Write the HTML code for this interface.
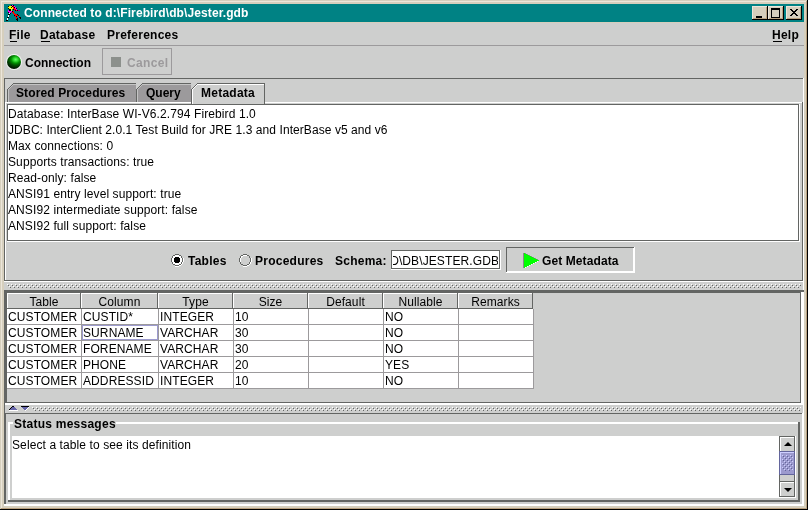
<!DOCTYPE html>
<html><head><meta charset="utf-8"><style>
html,body{margin:0;padding:0}
body{width:808px;height:510px;position:relative;overflow:hidden;background:#d6cfbd;font-family:"Liberation Sans",sans-serif;font-size:12px}
body div, body svg, body span{position:absolute;box-sizing:content-box}
.t{position:absolute;white-space:pre;line-height:16px;font-size:12px;font-family:"Liberation Sans",sans-serif;letter-spacing:0.1px}
.b{font-weight:bold;letter-spacing:0.25px}
body{will-change:transform}
</style></head><body>
<div style="left:1px;top:1px;width:806px;height:1px;background:#ece6da;"></div>
<div style="left:1px;top:1px;width:1px;height:507px;background:#ece6da;"></div>
<div style="left:1px;top:508px;width:806px;height:1px;background:#b9a17f;"></div>
<div style="left:806px;top:1px;width:1px;height:508px;background:#b9a17f;"></div>
<div style="left:0px;top:509px;width:808px;height:1px;background:#000000;"></div>
<div style="left:807px;top:0px;width:1px;height:510px;background:#000000;"></div>
<div style="left:4px;top:4px;width:800px;height:18px;background:#008284;"></div>
<span class="t b" style="left:24px;top:5px;color:#fff;letter-spacing:0.1px">Connected to d:\Firebird\db\Jester.gdb</span>
<div style="left:752px;top:6px;width:16px;height:14px;background:#000000;"></div>
<div style="left:752px;top:6px;width:15px;height:13px;background:#ece6da;"></div>
<div style="left:753px;top:7px;width:14px;height:12px;background:#b9a17f;"></div>
<div style="left:753px;top:7px;width:13px;height:11px;background:#d6cfbd;"></div>
<div style="left:756px;top:16px;width:6px;height:2px;background:#000"></div>
<div style="left:768px;top:6px;width:16px;height:14px;background:#000000;"></div>
<div style="left:768px;top:6px;width:15px;height:13px;background:#ece6da;"></div>
<div style="left:769px;top:7px;width:14px;height:12px;background:#b9a17f;"></div>
<div style="left:769px;top:7px;width:13px;height:11px;background:#d6cfbd;"></div>
<div style="left:771px;top:8px;width:7px;height:7px;border:1px solid #000;border-top-width:2px"></div>
<div style="left:786px;top:6px;width:16px;height:14px;background:#000000;"></div>
<div style="left:786px;top:6px;width:15px;height:13px;background:#ece6da;"></div>
<div style="left:787px;top:7px;width:14px;height:12px;background:#b9a17f;"></div>
<div style="left:787px;top:7px;width:13px;height:11px;background:#d6cfbd;"></div>
<svg style="left:789px;top:8px" width="10" height="9" viewBox="0 0 10 9"><path d="M1 1h2v1h1v1h2v-1h1v-1h2v1h-1v1h-1v1h-1v1h1v1h1v1h1v1h-2v-1h-1v-1h-2v1h-1v1h-2v-1h1v-1h1v-1h1v-1h-1v-1h-1v-1h-1z" fill="#000"/></svg>
<div style="left:4px;top:23px;width:800px;height:483px;background:#cecfce;"></div>
<span class="t b" style="left:9px;top:27px;color:#000;">File</span>
<span class="t b" style="left:40px;top:27px;color:#000;">Database</span>
<span class="t b" style="left:107px;top:27px;color:#000;">Preferences</span>
<span class="t b" style="left:772px;top:27px;color:#000;">Help</span>
<div style="left:10px;top:41px;width:7px;height:1px;background:#000;"></div>
<div style="left:41px;top:41px;width:9px;height:1px;background:#000;"></div>
<div style="left:773px;top:41px;width:9px;height:1px;background:#000;"></div>
<div style="left:4px;top:45px;width:800px;height:1px;background:#9c9a9c;"></div>
<div style="left:6px;top:54px;width:16px;height:16px;border-radius:50%;background:rgba(255,255,255,0.75)"></div><div style="left:7px;top:55px;width:14px;height:14px;border-radius:50%;background:radial-gradient(ellipse 120% 100% at 62% 32%, #66ff66 0px, #33dd33 2px, #009000 4.5px, #005000 7px, #002000 10px, #001000 12px)"></div>
<span class="t b" style="left:25px;top:55px;color:#000;letter-spacing:0px">Connection</span>
<div style="left:102px;top:48px;width:70px;height:27px;background:#9c9a9c;"></div>
<div style="left:103px;top:49px;width:68px;height:25px;background:#cecfce;"></div>
<div style="left:111px;top:57px;width:10px;height:10px;background:#8c908c;"></div>
<span class="t b" style="left:127px;top:55px;color:#9c9a9c;letter-spacing:0.35px">Cancel</span>
<div style="left:4px;top:78px;width:800px;height:204px;background:#ffffff;"></div>
<div style="left:4px;top:78px;width:799px;height:203px;background:#636563;"></div>
<div style="left:5px;top:79px;width:798px;height:202px;background:#cecfce;"></div>
<div style="left:5px;top:102px;width:798px;height:179px;background:#636563;"></div>
<div style="left:5px;top:102px;width:797px;height:178px;background:#ffffff;"></div>
<div style="left:6px;top:103px;width:796px;height:177px;background:#cecfce;"></div>
<svg style="left:7px;top:83px" width="129" height="19" shape-rendering="crispEdges"><polygon points="0,19 0,6 6,0 129,0 129,19" fill="#9c9a9c"/><rect x="0" y="6" width="1" height="13" fill="#636563"/><rect x="0" y="6" width="1" height="1" fill="#636563"/><rect x="1" y="5" width="1" height="1" fill="#636563"/><rect x="2" y="4" width="1" height="1" fill="#636563"/><rect x="3" y="3" width="1" height="1" fill="#636563"/><rect x="4" y="2" width="1" height="1" fill="#636563"/><rect x="5" y="1" width="1" height="1" fill="#636563"/><rect x="6" y="0" width="123" height="1" fill="#636563"/><rect x="1" y="6" width="1" height="13" fill="#c4c4c4"/><rect x="1" y="6" width="1" height="1" fill="#c4c4c4"/><rect x="2" y="5" width="1" height="1" fill="#c4c4c4"/><rect x="3" y="4" width="1" height="1" fill="#c4c4c4"/><rect x="4" y="3" width="1" height="1" fill="#c4c4c4"/><rect x="5" y="2" width="1" height="1" fill="#c4c4c4"/><rect x="6" y="1" width="123" height="1" fill="#c4c4c4"/></svg>
<span class="t b" style="left:16px;top:85px;color:#000;letter-spacing:0.12px">Stored Procedures</span>
<svg style="left:136px;top:83px" width="55" height="19" shape-rendering="crispEdges"><polygon points="0,19 0,6 6,0 55,0 55,19" fill="#9c9a9c"/><rect x="0" y="6" width="1" height="13" fill="#636563"/><rect x="0" y="6" width="1" height="1" fill="#636563"/><rect x="1" y="5" width="1" height="1" fill="#636563"/><rect x="2" y="4" width="1" height="1" fill="#636563"/><rect x="3" y="3" width="1" height="1" fill="#636563"/><rect x="4" y="2" width="1" height="1" fill="#636563"/><rect x="5" y="1" width="1" height="1" fill="#636563"/><rect x="6" y="0" width="49" height="1" fill="#636563"/><rect x="1" y="6" width="1" height="13" fill="#c4c4c4"/><rect x="1" y="6" width="1" height="1" fill="#c4c4c4"/><rect x="2" y="5" width="1" height="1" fill="#c4c4c4"/><rect x="3" y="4" width="1" height="1" fill="#c4c4c4"/><rect x="4" y="3" width="1" height="1" fill="#c4c4c4"/><rect x="5" y="2" width="1" height="1" fill="#c4c4c4"/><rect x="6" y="1" width="49" height="1" fill="#c4c4c4"/></svg>
<span class="t b" style="left:146px;top:85px;color:#000;letter-spacing:0px">Query</span>
<svg style="left:191px;top:83px" width="74" height="21" shape-rendering="crispEdges"><polygon points="0,21 0,6 6,0 74,0 74,21" fill="#cecfce"/><rect x="0" y="6" width="1" height="15" fill="#636563"/><rect x="0" y="6" width="1" height="1" fill="#636563"/><rect x="1" y="5" width="1" height="1" fill="#636563"/><rect x="2" y="4" width="1" height="1" fill="#636563"/><rect x="3" y="3" width="1" height="1" fill="#636563"/><rect x="4" y="2" width="1" height="1" fill="#636563"/><rect x="5" y="1" width="1" height="1" fill="#636563"/><rect x="6" y="0" width="68" height="1" fill="#636563"/><rect x="73" y="0" width="1" height="21" fill="#636563"/><rect x="1" y="6" width="1" height="15" fill="#ffffff"/><rect x="1" y="6" width="1" height="1" fill="#ffffff"/><rect x="2" y="5" width="1" height="1" fill="#ffffff"/><rect x="3" y="4" width="1" height="1" fill="#ffffff"/><rect x="4" y="3" width="1" height="1" fill="#ffffff"/><rect x="5" y="2" width="1" height="1" fill="#ffffff"/><rect x="6" y="1" width="67" height="1" fill="#ffffff"/></svg>
<span class="t b" style="left:201px;top:85px;color:#000;">Metadata</span>
<div style="left:7px;top:104px;width:793px;height:138px;background:#ffffff;"></div>
<div style="left:7px;top:104px;width:792px;height:137px;background:#636563;"></div>
<div style="left:8px;top:105px;width:790px;height:135px;background:#ffffff;"></div>
<span class="t" style="left:8px;top:106px;color:#000;">Database: InterBase WI-V6.2.794 Firebird 1.0</span>
<span class="t" style="left:8px;top:122px;color:#000;letter-spacing:0.07px">JDBC: InterClient 2.0.1 Test Build for JRE 1.3 and InterBase v5 and v6</span>
<span class="t" style="left:8px;top:138px;color:#000;">Max connections: 0</span>
<span class="t" style="left:8px;top:154px;color:#000;">Supports transactions: true</span>
<span class="t" style="left:8px;top:170px;color:#000;">Read-only: false</span>
<span class="t" style="left:8px;top:186px;color:#000;">ANSI91 entry level support: true</span>
<span class="t" style="left:8px;top:202px;color:#000;">ANSI92 intermediate support: false</span>
<span class="t" style="left:8px;top:218px;color:#000;">ANSI92 full support: false</span>
<svg style="left:171px;top:254px" width="13" height="13" shape-rendering="crispEdges"><rect x="4" y="1" width="4" height="1" fill="#fff"/><rect x="2" y="2" width="8" height="1" fill="#fff"/><rect x="2" y="3" width="8" height="1" fill="#fff"/><rect x="1" y="4" width="10" height="1" fill="#fff"/><rect x="1" y="5" width="10" height="1" fill="#fff"/><rect x="1" y="6" width="10" height="1" fill="#fff"/><rect x="1" y="7" width="10" height="1" fill="#fff"/><rect x="2" y="8" width="8" height="1" fill="#fff"/><rect x="2" y="9" width="8" height="1" fill="#fff"/><rect x="4" y="10" width="4" height="1" fill="#fff"/><rect x="4" y="3" width="4" height="6" fill="#000"/><rect x="3" y="4" width="6" height="4" fill="#000"/><rect x="4" y="12" width="4" height="1" fill="#fff"/><rect x="8" y="11" width="2" height="1" fill="#fff"/><rect x="10" y="10" width="1" height="1" fill="#fff"/><rect x="12" y="4" width="1" height="4" fill="#fff"/><rect x="11" y="8" width="1" height="2" fill="#fff"/><rect x="4" y="0" width="4" height="1" fill="#636563"/><rect x="2" y="1" width="2" height="1" fill="#636563"/><rect x="8" y="1" width="2" height="1" fill="#636563"/><rect x="4" y="11" width="4" height="1" fill="#636563"/><rect x="2" y="10" width="2" height="1" fill="#636563"/><rect x="8" y="10" width="2" height="1" fill="#636563"/><rect x="1" y="2" width="1" height="2" fill="#636563"/><rect x="10" y="2" width="1" height="2" fill="#636563"/><rect x="0" y="4" width="1" height="4" fill="#636563"/><rect x="11" y="4" width="1" height="4" fill="#636563"/><rect x="1" y="8" width="1" height="2" fill="#636563"/><rect x="10" y="8" width="1" height="2" fill="#636563"/></svg>
<span class="t b" style="left:188px;top:253px;color:#000;">Tables</span>
<svg style="left:239px;top:254px" width="13" height="13" shape-rendering="crispEdges"><rect x="4" y="1" width="4" height="1" fill="#fff"/><rect x="2" y="2" width="2" height="1" fill="#fff"/><rect x="2" y="3" width="1" height="1" fill="#fff"/><rect x="1" y="4" width="1" height="4" fill="#fff"/><rect x="4" y="12" width="4" height="1" fill="#fff"/><rect x="8" y="11" width="2" height="1" fill="#fff"/><rect x="10" y="10" width="1" height="1" fill="#fff"/><rect x="12" y="4" width="1" height="4" fill="#fff"/><rect x="11" y="8" width="1" height="2" fill="#fff"/><rect x="4" y="0" width="4" height="1" fill="#636563"/><rect x="2" y="1" width="2" height="1" fill="#636563"/><rect x="8" y="1" width="2" height="1" fill="#636563"/><rect x="4" y="11" width="4" height="1" fill="#636563"/><rect x="2" y="10" width="2" height="1" fill="#636563"/><rect x="8" y="10" width="2" height="1" fill="#636563"/><rect x="1" y="2" width="1" height="2" fill="#636563"/><rect x="10" y="2" width="1" height="2" fill="#636563"/><rect x="0" y="4" width="1" height="4" fill="#636563"/><rect x="11" y="4" width="1" height="4" fill="#636563"/><rect x="1" y="8" width="1" height="2" fill="#636563"/><rect x="10" y="8" width="1" height="2" fill="#636563"/></svg>
<span class="t b" style="left:255px;top:253px;color:#000;">Procedures</span>
<span class="t b" style="left:335px;top:253px;color:#000;">Schema:</span>
<div style="left:391px;top:250px;width:110px;height:20px;background:#ffffff;"></div>
<div style="left:391px;top:250px;width:109px;height:19px;background:#636563;"></div>
<div style="left:392px;top:251px;width:107px;height:17px;background:#ffffff;"></div>
<div style="left:393px;top:251px;width:105px;height:17px;overflow:hidden"><span class="t" style="right:-1px;top:2px">FIREBIRD\DB\JESTER.GDB</span></div>
<div style="left:506px;top:247px;width:129px;height:26px;background:#ffffff;"></div>
<div style="left:506px;top:247px;width:128px;height:25px;background:#636563;"></div>
<div style="left:507px;top:248px;width:127px;height:24px;background:#ffffff;"></div>
<div style="left:507px;top:248px;width:126px;height:23px;background:#cecfce;"></div>
<svg style="left:523px;top:253px" width="18" height="15" shape-rendering="crispEdges"><rect x="0" y="0" width="1" height="15" fill="#888888"/><rect x="1" y="0" width="1" height="1" fill="#00ff00"/><rect x="2" y="0" width="1" height="1" fill="#8a8a8a"/><rect x="1" y="1" width="3" height="1" fill="#00ff00"/><rect x="4" y="1" width="1" height="1" fill="#8a8a8a"/><rect x="1" y="2" width="5" height="1" fill="#00ff00"/><rect x="6" y="2" width="1" height="1" fill="#8a8a8a"/><rect x="1" y="3" width="7" height="1" fill="#00ff00"/><rect x="8" y="3" width="1" height="1" fill="#8a8a8a"/><rect x="1" y="4" width="9" height="1" fill="#00ff00"/><rect x="10" y="4" width="1" height="1" fill="#8a8a8a"/><rect x="1" y="5" width="11" height="1" fill="#00ff00"/><rect x="12" y="5" width="1" height="1" fill="#8a8a8a"/><rect x="1" y="6" width="13" height="1" fill="#00ff00"/><rect x="14" y="6" width="1" height="1" fill="#8a8a8a"/><rect x="1" y="7" width="15" height="1" fill="#00ff00"/><rect x="1" y="8" width="13" height="1" fill="#00ff00"/><rect x="14" y="8" width="1" height="1" fill="#ffffff"/><rect x="1" y="9" width="11" height="1" fill="#00ff00"/><rect x="12" y="9" width="1" height="1" fill="#ffffff"/><rect x="1" y="10" width="9" height="1" fill="#00ff00"/><rect x="10" y="10" width="1" height="1" fill="#ffffff"/><rect x="1" y="11" width="7" height="1" fill="#00ff00"/><rect x="8" y="11" width="1" height="1" fill="#ffffff"/><rect x="1" y="12" width="5" height="1" fill="#00ff00"/><rect x="6" y="12" width="1" height="1" fill="#ffffff"/><rect x="1" y="13" width="3" height="1" fill="#00ff00"/><rect x="4" y="13" width="1" height="1" fill="#ffffff"/><rect x="1" y="14" width="1" height="1" fill="#00ff00"/><rect x="2" y="14" width="1" height="1" fill="#ffffff"/></svg>
<span class="t b" style="left:542px;top:253px;color:#000;letter-spacing:0.1px">Get Metadata</span>
<svg style="left:7px;top:284px" width="794" height="4"><defs><pattern id="b7_284" width="4" height="4" patternUnits="userSpaceOnUse"><rect x="0" y="0" width="1" height="1" fill="#ffffff"/><rect x="1" y="1" width="1" height="1" fill="#636563"/><rect x="2" y="2" width="1" height="1" fill="#ffffff"/><rect x="3" y="3" width="1" height="1" fill="#636563"/></pattern></defs><rect width="794" height="4" fill="url(#b7_284)" shape-rendering="crispEdges"/></svg>
<div style="left:4px;top:290px;width:800px;height:115px;background:#ffffff;"></div>
<div style="left:4px;top:290px;width:800px;height:2px;background:#636563;"></div>
<div style="left:4px;top:290px;width:1px;height:115px;background:#636563;"></div>
<div style="left:5px;top:290px;width:1px;height:113px;background:#636563;"></div>
<div style="left:6px;top:292px;width:795px;height:111px;background:#636563;"></div>
<div style="left:7px;top:293px;width:793px;height:109px;background:#cecfce;"></div>
<div style="left:7px;top:293px;width:74px;height:16px;background:#636563;"></div>
<div style="left:7px;top:293px;width:73px;height:15px;background:#ffffff;"></div>
<div style="left:8px;top:294px;width:72px;height:14px;background:#cecfce;"></div>
<span class="t" style="left:7px;width:74px;text-align:center;top:294px">Table</span>
<div style="left:81px;top:293px;width:77px;height:16px;background:#636563;"></div>
<div style="left:81px;top:293px;width:76px;height:15px;background:#ffffff;"></div>
<div style="left:82px;top:294px;width:75px;height:14px;background:#cecfce;"></div>
<span class="t" style="left:81px;width:77px;text-align:center;top:294px">Column</span>
<div style="left:158px;top:293px;width:75px;height:16px;background:#636563;"></div>
<div style="left:158px;top:293px;width:74px;height:15px;background:#ffffff;"></div>
<div style="left:159px;top:294px;width:73px;height:14px;background:#cecfce;"></div>
<span class="t" style="left:158px;width:75px;text-align:center;top:294px">Type</span>
<div style="left:233px;top:293px;width:75px;height:16px;background:#636563;"></div>
<div style="left:233px;top:293px;width:74px;height:15px;background:#ffffff;"></div>
<div style="left:234px;top:294px;width:73px;height:14px;background:#cecfce;"></div>
<span class="t" style="left:233px;width:75px;text-align:center;top:294px">Size</span>
<div style="left:308px;top:293px;width:75px;height:16px;background:#636563;"></div>
<div style="left:308px;top:293px;width:74px;height:15px;background:#ffffff;"></div>
<div style="left:309px;top:294px;width:73px;height:14px;background:#cecfce;"></div>
<span class="t" style="left:308px;width:75px;text-align:center;top:294px">Default</span>
<div style="left:383px;top:293px;width:75px;height:16px;background:#636563;"></div>
<div style="left:383px;top:293px;width:74px;height:15px;background:#ffffff;"></div>
<div style="left:384px;top:294px;width:73px;height:14px;background:#cecfce;"></div>
<span class="t" style="left:383px;width:75px;text-align:center;top:294px">Nullable</span>
<div style="left:458px;top:293px;width:75px;height:16px;background:#636563;"></div>
<div style="left:458px;top:293px;width:74px;height:15px;background:#ffffff;"></div>
<div style="left:459px;top:294px;width:73px;height:14px;background:#cecfce;"></div>
<span class="t" style="left:458px;width:75px;text-align:center;top:294px">Remarks</span>
<div style="left:7px;top:309px;width:527px;height:80px;background:#9c9a9c;"></div>
<div style="left:7px;top:309px;width:74px;height:15px;background:#ffffff;"></div>
<span class="t" style="left:8px;top:309px;color:#000;">CUSTOMER</span>
<div style="left:82px;top:309px;width:76px;height:15px;background:#ffffff;"></div>
<span class="t" style="left:83px;top:309px;color:#000;">CUSTID*</span>
<div style="left:159px;top:309px;width:74px;height:15px;background:#ffffff;"></div>
<span class="t" style="left:160px;top:309px;color:#000;">INTEGER</span>
<div style="left:234px;top:309px;width:74px;height:15px;background:#ffffff;"></div>
<span class="t" style="left:235px;top:309px;color:#000;">10</span>
<div style="left:309px;top:309px;width:74px;height:15px;background:#ffffff;"></div>
<div style="left:384px;top:309px;width:74px;height:15px;background:#ffffff;"></div>
<span class="t" style="left:385px;top:309px;color:#000;">NO</span>
<div style="left:459px;top:309px;width:74px;height:15px;background:#ffffff;"></div>
<div style="left:7px;top:325px;width:74px;height:15px;background:#ffffff;"></div>
<span class="t" style="left:8px;top:325px;color:#000;">CUSTOMER</span>
<div style="left:82px;top:325px;width:76px;height:15px;background:#ffffff;"></div>
<span class="t" style="left:83px;top:325px;color:#000;">SURNAME</span>
<div style="left:159px;top:325px;width:74px;height:15px;background:#ffffff;"></div>
<span class="t" style="left:160px;top:325px;color:#000;">VARCHAR</span>
<div style="left:234px;top:325px;width:74px;height:15px;background:#ffffff;"></div>
<span class="t" style="left:235px;top:325px;color:#000;">30</span>
<div style="left:309px;top:325px;width:74px;height:15px;background:#ffffff;"></div>
<div style="left:384px;top:325px;width:74px;height:15px;background:#ffffff;"></div>
<span class="t" style="left:385px;top:325px;color:#000;">NO</span>
<div style="left:459px;top:325px;width:74px;height:15px;background:#ffffff;"></div>
<div style="left:7px;top:341px;width:74px;height:15px;background:#ffffff;"></div>
<span class="t" style="left:8px;top:341px;color:#000;">CUSTOMER</span>
<div style="left:82px;top:341px;width:76px;height:15px;background:#ffffff;"></div>
<span class="t" style="left:83px;top:341px;color:#000;">FORENAME</span>
<div style="left:159px;top:341px;width:74px;height:15px;background:#ffffff;"></div>
<span class="t" style="left:160px;top:341px;color:#000;">VARCHAR</span>
<div style="left:234px;top:341px;width:74px;height:15px;background:#ffffff;"></div>
<span class="t" style="left:235px;top:341px;color:#000;">30</span>
<div style="left:309px;top:341px;width:74px;height:15px;background:#ffffff;"></div>
<div style="left:384px;top:341px;width:74px;height:15px;background:#ffffff;"></div>
<span class="t" style="left:385px;top:341px;color:#000;">NO</span>
<div style="left:459px;top:341px;width:74px;height:15px;background:#ffffff;"></div>
<div style="left:7px;top:357px;width:74px;height:15px;background:#ffffff;"></div>
<span class="t" style="left:8px;top:357px;color:#000;">CUSTOMER</span>
<div style="left:82px;top:357px;width:76px;height:15px;background:#ffffff;"></div>
<span class="t" style="left:83px;top:357px;color:#000;">PHONE</span>
<div style="left:159px;top:357px;width:74px;height:15px;background:#ffffff;"></div>
<span class="t" style="left:160px;top:357px;color:#000;">VARCHAR</span>
<div style="left:234px;top:357px;width:74px;height:15px;background:#ffffff;"></div>
<span class="t" style="left:235px;top:357px;color:#000;">20</span>
<div style="left:309px;top:357px;width:74px;height:15px;background:#ffffff;"></div>
<div style="left:384px;top:357px;width:74px;height:15px;background:#ffffff;"></div>
<span class="t" style="left:385px;top:357px;color:#000;">YES</span>
<div style="left:459px;top:357px;width:74px;height:15px;background:#ffffff;"></div>
<div style="left:7px;top:373px;width:74px;height:15px;background:#ffffff;"></div>
<span class="t" style="left:8px;top:373px;color:#000;">CUSTOMER</span>
<div style="left:82px;top:373px;width:76px;height:15px;background:#ffffff;"></div>
<span class="t" style="left:83px;top:373px;color:#000;">ADDRESSID</span>
<div style="left:159px;top:373px;width:74px;height:15px;background:#ffffff;"></div>
<span class="t" style="left:160px;top:373px;color:#000;">INTEGER</span>
<div style="left:234px;top:373px;width:74px;height:15px;background:#ffffff;"></div>
<span class="t" style="left:235px;top:373px;color:#000;">10</span>
<div style="left:309px;top:373px;width:74px;height:15px;background:#ffffff;"></div>
<div style="left:384px;top:373px;width:74px;height:15px;background:#ffffff;"></div>
<span class="t" style="left:385px;top:373px;color:#000;">NO</span>
<div style="left:459px;top:373px;width:74px;height:15px;background:#ffffff;"></div>
<div style="left:82px;top:325px;width:74px;height:13px;border:1px solid #9c9ace"></div>
<svg style="left:8px;top:406px" width="24" height="5" shape-rendering="crispEdges"><rect x="4" y="0" width="1" height="1" fill="#000000"/><rect x="5" y="0" width="1" height="1" fill="#000000"/><rect x="13" y="0" width="1" height="1" fill="#000000"/><rect x="14" y="0" width="1" height="1" fill="#000000"/><rect x="15" y="0" width="1" height="1" fill="#000000"/><rect x="16" y="0" width="1" height="1" fill="#000000"/><rect x="17" y="0" width="1" height="1" fill="#000000"/><rect x="18" y="0" width="1" height="1" fill="#000000"/><rect x="19" y="0" width="1" height="1" fill="#000000"/><rect x="20" y="0" width="1" height="1" fill="#000000"/><rect x="3" y="1" width="1" height="1" fill="#000000"/><rect x="4" y="1" width="1" height="1" fill="#6666aa"/><rect x="5" y="1" width="1" height="1" fill="#6666aa"/><rect x="6" y="1" width="1" height="1" fill="#6666aa"/><rect x="14" y="1" width="1" height="1" fill="#6666aa"/><rect x="15" y="1" width="1" height="1" fill="#6666aa"/><rect x="16" y="1" width="1" height="1" fill="#6666aa"/><rect x="17" y="1" width="1" height="1" fill="#6666aa"/><rect x="18" y="1" width="1" height="1" fill="#6666aa"/><rect x="19" y="1" width="1" height="1" fill="#6666aa"/><rect x="20" y="1" width="1" height="1" fill="#ffffff"/><rect x="2" y="2" width="1" height="1" fill="#000000"/><rect x="3" y="2" width="1" height="1" fill="#6666aa"/><rect x="4" y="2" width="1" height="1" fill="#6666aa"/><rect x="5" y="2" width="1" height="1" fill="#6666aa"/><rect x="6" y="2" width="1" height="1" fill="#6666aa"/><rect x="7" y="2" width="1" height="1" fill="#6666aa"/><rect x="15" y="2" width="1" height="1" fill="#6666aa"/><rect x="16" y="2" width="1" height="1" fill="#6666aa"/><rect x="17" y="2" width="1" height="1" fill="#6666aa"/><rect x="18" y="2" width="1" height="1" fill="#6666aa"/><rect x="19" y="2" width="1" height="1" fill="#ffffff"/><rect x="1" y="3" width="1" height="1" fill="#000000"/><rect x="2" y="3" width="1" height="1" fill="#6666aa"/><rect x="3" y="3" width="1" height="1" fill="#6666aa"/><rect x="4" y="3" width="1" height="1" fill="#6666aa"/><rect x="5" y="3" width="1" height="1" fill="#6666aa"/><rect x="6" y="3" width="1" height="1" fill="#6666aa"/><rect x="7" y="3" width="1" height="1" fill="#6666aa"/><rect x="8" y="3" width="1" height="1" fill="#6666aa"/><rect x="16" y="3" width="1" height="1" fill="#6666aa"/><rect x="17" y="3" width="1" height="1" fill="#6666aa"/><rect x="18" y="3" width="1" height="1" fill="#ffffff"/><rect x="1" y="4" width="1" height="1" fill="#ffffff"/><rect x="2" y="4" width="1" height="1" fill="#ffffff"/><rect x="3" y="4" width="1" height="1" fill="#ffffff"/><rect x="4" y="4" width="1" height="1" fill="#ffffff"/><rect x="5" y="4" width="1" height="1" fill="#ffffff"/><rect x="6" y="4" width="1" height="1" fill="#ffffff"/><rect x="7" y="4" width="1" height="1" fill="#ffffff"/><rect x="8" y="4" width="1" height="1" fill="#ffffff"/><rect x="9" y="4" width="1" height="1" fill="#ffffff"/><rect x="17" y="4" width="1" height="1" fill="#ffffff"/></svg>
<svg style="left:32px;top:407px" width="769" height="4"><defs><pattern id="b32_407" width="4" height="4" patternUnits="userSpaceOnUse"><rect x="0" y="0" width="1" height="1" fill="#ffffff"/><rect x="1" y="1" width="1" height="1" fill="#636563"/><rect x="2" y="2" width="1" height="1" fill="#ffffff"/><rect x="3" y="3" width="1" height="1" fill="#636563"/></pattern></defs><rect width="769" height="4" fill="url(#b32_407)" shape-rendering="crispEdges"/></svg>
<div style="left:4px;top:405px;width:1px;height:8px;background:#636563;"></div>
<div style="left:803px;top:282px;width:1px;height:8px;background:#ffffff;"></div>
<div style="left:803px;top:405px;width:1px;height:8px;background:#ffffff;"></div>
<div style="left:4px;top:413px;width:800px;height:93px;background:#ffffff;"></div>
<div style="left:4px;top:413px;width:798px;height:91px;background:#636563;"></div>
<div style="left:6px;top:414px;width:796px;height:90px;background:#cecfce;"></div>
<div style="left:8px;top:422px;width:792px;height:80px;background:#636563;"></div>
<div style="left:8px;top:422px;width:790px;height:78px;background:#ffffff;"></div>
<div style="left:10px;top:424px;width:788px;height:76px;background:#cecfce;"></div>
<div style="left:13px;top:416px;width:103px;height:13px;background:#cecfce;"></div>
<span class="t b" style="left:14px;top:416px;color:#000;">Status messages</span>
<div style="left:12px;top:436px;width:767px;height:62px;background:#ffffff;"></div>
<span class="t" style="left:12px;top:437px;color:#000;">Select a table to see its definition</span>
<div style="left:779px;top:436px;width:17px;height:62px;background:#ffffff;"></div>
<div style="left:779px;top:436px;width:16px;height:61px;background:#636563;"></div>
<div style="left:780px;top:437px;width:14px;height:60px;background:#cecfce;"></div>
<div style="left:779px;top:436px;width:16px;height:16px;background:#636563;"></div>
<div style="left:780px;top:437px;width:16px;height:16px;background:#ffffff;"></div>
<div style="left:780px;top:437px;width:15px;height:15px;background:#636563;"></div>
<div style="left:780px;top:437px;width:14px;height:14px;background:#ffffff;"></div>
<div style="left:781px;top:438px;width:13px;height:13px;background:#cecfce;"></div>
<svg style="left:784px;top:442px" width="8" height="4"><polygon points="0,4 4,0 8,4" fill="#000"/></svg>
<div style="left:779px;top:451px;width:16px;height:24px;background:#63659c;"></div>
<div style="left:780px;top:452px;width:14px;height:22px;background:#cecfff;"></div>
<div style="left:781px;top:453px;width:13px;height:21px;background:#9c9ace;"></div>
<svg style="left:782px;top:455px" width="11" height="16"><defs><pattern id="tb" width="4" height="4" patternUnits="userSpaceOnUse"><rect x="0" y="0" width="1" height="1" fill="#cecfff"/><rect x="1" y="1" width="1" height="1" fill="#63659c"/><rect x="2" y="2" width="1" height="1" fill="#cecfff"/><rect x="3" y="3" width="1" height="1" fill="#63659c"/></pattern></defs><rect width="11" height="16" fill="url(#tb)" shape-rendering="crispEdges"/></svg>
<div style="left:779px;top:481px;width:16px;height:16px;background:#636563;"></div>
<div style="left:780px;top:482px;width:16px;height:16px;background:#ffffff;"></div>
<div style="left:780px;top:482px;width:15px;height:15px;background:#636563;"></div>
<div style="left:780px;top:482px;width:14px;height:14px;background:#ffffff;"></div>
<div style="left:781px;top:483px;width:13px;height:13px;background:#cecfce;"></div>
<svg style="left:784px;top:488px" width="8" height="4"><polygon points="0,0 8,0 4,4" fill="#000"/></svg>
<svg style="left:6px;top:5px" width="16" height="16" shape-rendering="crispEdges"><rect x="5" y="0" width="1" height="1" fill="#000"/><rect x="6" y="0" width="1" height="1" fill="#ff00ff"/><rect x="7" y="0" width="1" height="1" fill="#000"/><rect x="2" y="1" width="1" height="1" fill="#000"/><rect x="3" y="1" width="1" height="1" fill="#ffff00"/><rect x="4" y="1" width="1" height="1" fill="#ffff00"/><rect x="5" y="1" width="1" height="1" fill="#ffff00"/><rect x="6" y="1" width="1" height="1" fill="#000"/><rect x="7" y="1" width="1" height="1" fill="#ff0000"/><rect x="8" y="1" width="1" height="1" fill="#ff00ff"/><rect x="2" y="2" width="1" height="1" fill="#ffff00"/><rect x="3" y="2" width="1" height="1" fill="#ffff00"/><rect x="4" y="2" width="1" height="1" fill="#ffff00"/><rect x="5" y="2" width="1" height="1" fill="#000"/><rect x="6" y="2" width="1" height="1" fill="#ffff00"/><rect x="7" y="2" width="1" height="1" fill="#ff0000"/><rect x="8" y="2" width="1" height="1" fill="#000"/><rect x="9" y="2" width="1" height="1" fill="#ff00ff"/><rect x="2" y="3" width="1" height="1" fill="#000"/><rect x="3" y="3" width="1" height="1" fill="#ffff00"/><rect x="4" y="3" width="1" height="1" fill="#ffff00"/><rect x="5" y="3" width="1" height="1" fill="#ffff00"/><rect x="6" y="3" width="1" height="1" fill="#ffff00"/><rect x="7" y="3" width="1" height="1" fill="#ff0000"/><rect x="8" y="3" width="1" height="1" fill="#ff0000"/><rect x="9" y="3" width="1" height="1" fill="#ff00ff"/><rect x="10" y="3" width="1" height="1" fill="#000"/><rect x="3" y="4" width="1" height="1" fill="#000"/><rect x="4" y="4" width="1" height="1" fill="#000"/><rect x="5" y="4" width="1" height="1" fill="#ffff00"/><rect x="7" y="4" width="1" height="1" fill="#000"/><rect x="8" y="4" width="1" height="1" fill="#ff0000"/><rect x="9" y="4" width="1" height="1" fill="#ff0000"/><rect x="10" y="4" width="1" height="1" fill="#ff00ff"/><rect x="2" y="5" width="1" height="1" fill="#ff00ff"/><rect x="3" y="5" width="1" height="1" fill="#000"/><rect x="4" y="5" width="1" height="1" fill="#000"/><rect x="5" y="5" width="1" height="1" fill="#ffff00"/><rect x="9" y="5" width="1" height="1" fill="#000"/><rect x="10" y="5" width="1" height="1" fill="#ff0000"/><rect x="11" y="5" width="1" height="1" fill="#000"/><rect x="12" y="5" width="1" height="1" fill="#a000a0"/><rect x="13" y="5" width="1" height="1" fill="#a000a0"/><rect x="2" y="6" width="1" height="1" fill="#ff00ff"/><rect x="3" y="6" width="1" height="1" fill="#ff00ff"/><rect x="4" y="6" width="1" height="1" fill="#ff00ff"/><rect x="5" y="6" width="1" height="1" fill="#ff00ff"/><rect x="6" y="6" width="1" height="1" fill="#000"/><rect x="7" y="6" width="1" height="1" fill="#ff0000"/><rect x="2" y="7" width="1" height="1" fill="#000"/><rect x="3" y="7" width="1" height="1" fill="#ff00ff"/><rect x="4" y="7" width="1" height="1" fill="#ff00ff"/><rect x="6" y="7" width="1" height="1" fill="#ff0000"/><rect x="7" y="7" width="1" height="1" fill="#ff0000"/><rect x="3" y="8" width="1" height="1" fill="#ffffff"/><rect x="4" y="8" width="1" height="1" fill="#000"/><rect x="7" y="8" width="1" height="1" fill="#ff0000"/><rect x="8" y="8" width="1" height="1" fill="#ff0000"/><rect x="2" y="9" width="1" height="1" fill="#000"/><rect x="3" y="9" width="1" height="1" fill="#000"/><rect x="8" y="9" width="1" height="1" fill="#ff0000"/><rect x="9" y="9" width="1" height="1" fill="#ff0000"/><rect x="10" y="9" width="1" height="1" fill="#ff0000"/><rect x="11" y="9" width="1" height="1" fill="#000"/><rect x="2" y="10" width="1" height="1" fill="#ffffff"/><rect x="8" y="10" width="1" height="1" fill="#000"/><rect x="9" y="10" width="1" height="1" fill="#ff0000"/><rect x="10" y="10" width="1" height="1" fill="#ff0000"/><rect x="11" y="10" width="1" height="1" fill="#ff0000"/><rect x="12" y="10" width="1" height="1" fill="#000"/><rect x="2" y="11" width="1" height="1" fill="#ffffff"/><rect x="9" y="11" width="1" height="1" fill="#ff0000"/><rect x="10" y="11" width="1" height="1" fill="#000"/><rect x="13" y="11" width="1" height="1" fill="#ff0000"/><rect x="1" y="12" width="1" height="1" fill="#000"/><rect x="2" y="12" width="1" height="1" fill="#000"/><rect x="10" y="12" width="1" height="1" fill="#ff0000"/><rect x="13" y="12" width="1" height="1" fill="#000"/><rect x="14" y="12" width="1" height="1" fill="#000"/><rect x="1" y="13" width="1" height="1" fill="#ffffff"/><rect x="10" y="13" width="1" height="1" fill="#ff0000"/><rect x="11" y="13" width="1" height="1" fill="#000"/><rect x="14" y="13" width="1" height="1" fill="#000"/><rect x="1" y="14" width="1" height="1" fill="#ffffff"/><rect x="10" y="14" width="1" height="1" fill="#000"/><rect x="11" y="14" width="1" height="1" fill="#000"/><rect x="0" y="15" width="1" height="1" fill="#000"/><rect x="1" y="15" width="1" height="1" fill="#000"/><rect x="11" y="15" width="1" height="1" fill="#000"/></svg>
</body></html>
